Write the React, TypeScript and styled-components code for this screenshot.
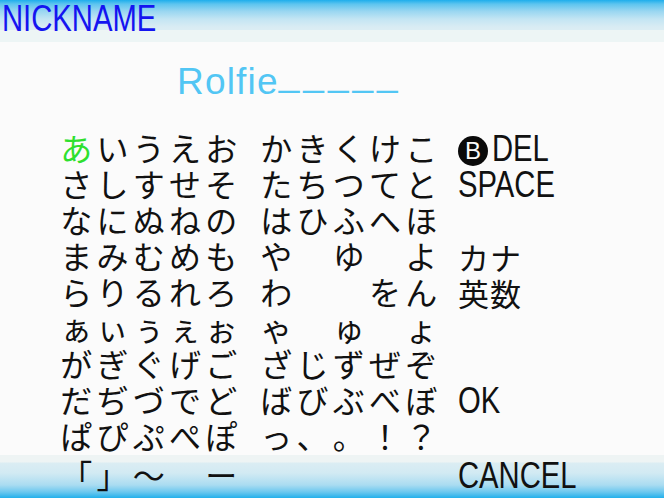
import React from 'react';
import styled, { createGlobalStyle } from 'styled-components';

const Global = createGlobalStyle`
  html, body { margin: 0; padding: 0; background: #fbfbfb; }
  #root { width: 664px; height: 498px; overflow: hidden; }
`;

const Screen = styled.div`
  width: 664px;
  height: 498px;
  display: flex;
  flex-direction: column;
  background: #fbfbfb;
  overflow: hidden;
`;

const Header = styled.header`
  flex: none;
  height: 42px;
  background: linear-gradient(
    to bottom,
    #1eaeec 0px,
    #5cc4ef 4px,
    #98d6f1 11px,
    #c3e5f3 19px,
    #d9ecf3 27px,
    #dbedf3 30px,
    #edf5f5 30px,
    #edf5f5 42px
  );
`;

const Condensed = styled.span<{ $color?: string }>`
  display: inline-block;
  font-family: 'Liberation Sans', Arial, sans-serif;
  font-size: 37px;
  line-height: 36px;
  color: ${(p) => p.$color ?? '#111'};
  transform: scaleX(0.79);
  transform-origin: left center;
  white-space: nowrap;
`;

const Title = styled(Condensed)`
  line-height: 38px;
  margin-left: 2px;
`;

const Main = styled.main`
  flex: 1;
  min-height: 0;
  display: flex;
  flex-direction: column;
  padding-top: 14px;
`;

const NameLine = styled.div`
  height: 36px;
  margin-bottom: 39px;
  padding-left: 177px;
  font-family: 'Liberation Sans', Arial, sans-serif;
  font-size: 37px;
  line-height: 36px;
  color: #52c6f4;
  white-space: nowrap;
  letter-spacing: 1.2px;
`;

const Slots = styled.span`
  letter-spacing: 4px;
  vertical-align: 8px;
`;

const Row = styled.div`
  height: 36px;
  display: flex;
  align-items: center;
  gap: 18.5px;
  padding-left: 58px;
`;

const Group = styled.div`
  display: flex;
  align-items: flex-start;
  align-self: stretch;
  width: 181.5px;
  flex: none;
  overflow: visible;
`;

const Cell = styled.span<{ $hl?: boolean }>`
  width: 36.3px;
  height: 32px;
  flex: none;
  text-align: center;
  font-family: 'Noto Sans CJK JP', 'Noto Sans', sans-serif;
  font-size: 32px;
  line-height: 32px;
  color: ${(p) => (p.$hl ? '#2ee02e' : '#111')};
`;

const Label = styled.div`
  display: flex;
  align-items: center;
  height: 36px;
`;

const CjkLabel = styled.span`
  font-family: 'Noto Sans CJK JP', 'Noto Sans', sans-serif;
  font-size: 31px;
  line-height: 32px;
  letter-spacing: 1px;
  color: #111;
`;

const BButton = styled.span`
  width: 30px;
  height: 30px;
  border-radius: 50%;
  background: #0a0a0a;
  color: #fbfbfb;
  display: inline-flex;
  align-items: center;
  justify-content: center;
  font-family: 'Liberation Sans', Arial, sans-serif;
  font-size: 24px;
  line-height: 1;
  margin-top: 4px;
  margin-right: 4px;
  flex: none;
`;

const Footer = styled.footer`
  flex: none;
  height: 43px;
  padding-top: 3px;
  box-sizing: border-box;
  background: linear-gradient(
    to bottom,
    #eef4f4 0px,
    #eef4f4 7px,
    #dbedf3 8px,
    #d2eaf3 18px,
    #aadcf1 30px,
    #6cc8ef 37px,
    #22b0eb 43px
  );
`;

type RowData = { a: string; b: string; label?: string };

const rows: RowData[] = [
  { a: 'あいうえお', b: 'かきくけこ', label: 'DEL' },
  { a: 'さしすせそ', b: 'たちつてと', label: 'SPACE' },
  { a: 'なにぬねの', b: 'はひふへほ' },
  { a: 'まみむめも', b: 'や　ゆ　よ', label: 'カナ' },
  { a: 'らりるれろ', b: 'わ　　をん', label: '英数' },
  { a: 'ぁぃぅぇぉ', b: 'ゃ　ゅ　ょ' },
  { a: 'がぎぐげご', b: 'ざじずぜぞ' },
  { a: 'だぢづでど', b: 'ばびぶべぼ', label: 'OK' },
  { a: 'ぱぴぷぺぽ', b: 'っ、。！？' },
];

const Kana: React.FC<{ text: string; highlightFirst?: boolean }> = ({ text, highlightFirst }) => (
  <Group>
    {Array.from(text).map((ch, i) => (
      <Cell key={i} $hl={highlightFirst && i === 0}>
        {ch === '　' ? '\u00a0' : ch}
      </Cell>
    ))}
  </Group>
);

const RowLabel: React.FC<{ label?: string }> = ({ label }) => {
  if (!label) return null;
  if (label === 'DEL') {
    return (
      <Label>
        <BButton>B</BButton>
        <Condensed>DEL</Condensed>
      </Label>
    );
  }
  if (label === 'カナ' || label === '英数') {
    return (
      <Label>
        <CjkLabel>{label}</CjkLabel>
      </Label>
    );
  }
  return (
    <Label>
      <Condensed>{label}</Condensed>
    </Label>
  );
};

export default function App() {
  return (
    <>
      <Global />
      <Screen>
        <Header>
          <Title $color="#1414f0">NICKNAME</Title>
        </Header>
        <Main>
          <NameLine>
            Rolfie<Slots>_____</Slots>
          </NameLine>
          {rows.map((r, i) => (
            <Row key={i}>
              <Kana text={r.a} highlightFirst={i === 0} />
              <Kana text={r.b} />
              <RowLabel label={r.label} />
            </Row>
          ))}
        </Main>
        <Footer>
          <Row>
            <Kana text="「」～　ー" />
            <Group />
            <Label>
              <Condensed>CANCEL</Condensed>
            </Label>
          </Row>
        </Footer>
      </Screen>
    </>
  );
}
